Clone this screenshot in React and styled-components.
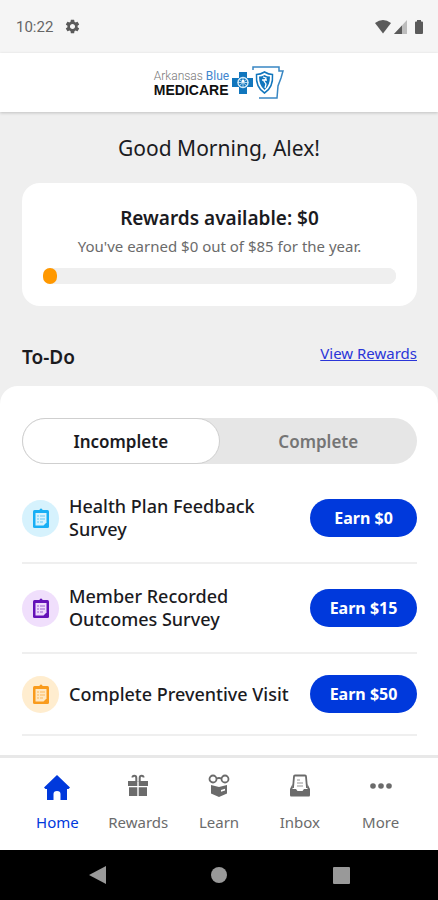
import React, { useState } from 'react';
import styled, { createGlobalStyle } from 'styled-components';
import { MdSettings } from 'react-icons/md';

const blue = '#0039dc';
const ink = '#1b1b1f';
const grey = '#6b6b6b';
const line = '#efefef';

const GlobalStyle = createGlobalStyle`
    * {
        box-sizing: border-box;
    }

    body {
        margin: 0;
        background-color: #efefef;
        color: ${ink};
        font-family: "Noto Sans", "Open Sans", sans-serif;
    }

    h1, h2, p, ul {
        margin: 0;
        padding: 0;
    }

    button {
        border: 0;
        font-family: inherit;
        cursor: pointer;
    }
`;

const Screen = styled.div`
    display: flex;
    flex-direction: column;
    min-height: 100vh;
`;

const StatusBar = styled.div`
    display: flex;
    align-items: center;
    justify-content: space-between;
    height: 53px;
    padding: 0 15px 0 16px;
    background-color: #f5f5f5;
    color: #5a5a5a;
`;

const StatusGroup = styled.div`
    display: flex;
    align-items: center;
    gap: ${props => props.$gap}px;
`;

const Time = styled.span`
    font: 400 15px/20px Roboto, sans-serif;
    color: #666;
`;

const Header = styled.header`
    display: flex;
    align-items: center;
    justify-content: center;
    gap: 3px;
    height: 59px;
    background-color: #fff;
    box-shadow: 0 1px 3px rgba(0, 0, 0, 0.2);
`;

const Wordmark = styled.div`
    display: flex;
    flex-direction: column;
    line-height: 14px;
`;

const WordmarkTop = styled.span`
    font-family: Roboto, sans-serif;
    font-size: 12px;
    font-weight: 300;
    color: #777;

    em {
        font-style: normal;
        font-weight: 400;
        color: #3f86cf;
    }
`;

const WordmarkBottom = styled.span`
    font-family: "Liberation Sans", sans-serif;
    font-size: 14px;
    font-weight: bold;
    color: #111;
`;

const Main = styled.main`
    display: flex;
    flex: 1;
    flex-direction: column;
`;

const Greeting = styled.h1`
    padding: 22px 22px 21px;
    font-size: 21px;
    font-weight: 400;
    line-height: 28px;
    text-align: center;
`;

const RewardsCard = styled.section`
    display: flex;
    flex-direction: column;
    margin: 0 21px 0 22px;
    padding: 21px 21px 22px;
    border-radius: 18px;
    background-color: #fff;
    text-align: center;
`;

const RewardsTitle = styled.h2`
    font-size: 19px;
    font-weight: 600;
    line-height: 28px;
`;

const RewardsText = styled.p`
    font-size: 15px;
    line-height: 28px;
    color: ${grey};
`;

const Progress = styled.progress`
    appearance: none;
    display: block;
    width: 100%;
    height: 16px;
    margin-top: 8px;
    border: 0;
    border-radius: 8px;
    background-color: #efefef;

    &::-webkit-progress-bar {
        border-radius: 8px;
        background-color: #efefef;
    }

    &::-webkit-progress-value {
        min-width: 14px;
        border-radius: 8px;
        background-color: #ff9800;
    }
`;

const TodoHeader = styled.div`
    display: flex;
    align-items: center;
    justify-content: space-between;
    height: 80px;
    padding: 22px 21px 0 22px;
`;

const TodoTitle = styled.h2`
    font-size: 19px;
    font-weight: 600;
    line-height: 24px;
`;

const RewardsLink = styled.a`
    padding-bottom: 8px;
    font-size: 15px;
    line-height: 20px;
    color: #2a35d8;
`;

const Sheet = styled.section`
    flex: 1;
    padding: 32px 21px 18px 22px;
    border-radius: 18px 18px 0 0;
    background-color: #fff;
`;

const Toggle = styled.div`
    display: flex;
    height: 46px;
    margin-bottom: 10px;
    border-radius: 23px;
    background-color: #e6e6e6;
`;

const ToggleButton = styled.button`
    flex: 1;
    border: 1px solid ${props => (props.$active ? '#cfcfcf' : 'transparent')};
    border-radius: 23px;
    background-color: ${props => (props.$active ? '#fff' : 'transparent')};
    color: ${props => (props.$active ? ink : '#757575')};
    font-size: 17px;
    font-weight: 600;
`;

const TaskList = styled.ul`
    list-style: none;
`;

const Task = styled.li`
    display: flex;
    align-items: center;
    padding: 21px 0;
    border-bottom: 2px solid ${line};
`;

const TaskIcon = styled.span`
    display: flex;
    flex-shrink: 0;
    align-items: center;
    justify-content: center;
    width: 37px;
    height: 37px;
    border-radius: 50%;
    background-color: ${props => props.$background};
`;

const TaskTitle = styled.span`
    flex: 1;
    padding: 0 12px 0 10px;
    font-size: 18px;
    font-weight: 500;
    line-height: 23px;
`;

const EarnButton = styled.button`
    flex-shrink: 0;
    width: 107px;
    height: 38px;
    border-radius: 19px;
    background-color: ${blue};
    color: #fff;
    font-size: 16px;
    font-weight: 700;
`;

const TabBar = styled.nav`
    display: flex;
    height: 95px;
    padding: 0 17px;
    border-top: 3px solid #e8e8e8;
    background-color: #fff;
`;

const Tab = styled.a`
    display: flex;
    flex: 1;
    flex-direction: column;
    align-items: center;
    gap: 9px;
    padding-top: 15px;
    color: ${props => (props.$active ? blue : grey)};
    font-size: 15px;
    line-height: 20px;
    text-decoration: none;
`;

const TabIcon = styled.svg`
    width: 30px;
    height: 30px;
`;

const SystemBar = styled.div`
    display: flex;
    height: 50px;
    padding: 0 36px;
    background-color: #000;
`;

const SystemButton = styled.button`
    display: flex;
    flex: 1;
    align-items: center;
    justify-content: center;
    padding: 0;
    background: none;
    color: #999;
`;

const LogoMarks = () => (
    <svg width="52" height="36" viewBox="0 0 52 36" fill="none" aria-hidden="true">
        <path d="M7 7h8v6h6v9h-6v7H7v-7H0v-9h7z" fill="#1176bd" />
        <circle cx="11" cy="17.5" r="5" stroke="#d5ebf8" strokeWidth="1.4" />
        <path d="M11 12v11M5.500 17.500h11M7 14l8 7M15 14l-8 7" stroke="#d5ebf8" strokeWidth="0.8" />
        <circle cx="11" cy="16" r="1.300" fill="#fff" />
        <path d="M21 5V2h26v4h4l-2 7-3 8-1 12H27" stroke="#3987c3" strokeWidth="1.500" />
        <path d="M24.500 9.500q4 0 8-2.500 4 2.500 8 2.500 1 13-8 18.500-9-5.500-8-18.500z" fill="#fff" stroke="#1176bd" strokeWidth="1.500" />
        <path d="M27 11.500q3 0 5.500-1.500 2.500 1.500 5.500 1.500 0 9-5.500 13.500-5.500-4.500-5.500-13.500z" fill="#1176bd" />
        <path d="M31 12l3 1-2 3 2 3-1 4M30 15h5" stroke="#fff" strokeWidth="1.300" />
    </svg>
);

const WifiIcon = () => (
    <svg width="16" height="14" viewBox="0 0 16 14" aria-hidden="true">
        <path d="M0 3q8-6 16 0L8 13.500z" fill="currentColor" />
    </svg>
);

const SignalIcon = () => (
    <svg width="13" height="14" viewBox="0 0 13 14" aria-hidden="true">
        <path d="M13 0v14H0z" fill="#bdbdbd" />
        <path d="M8 5.400V14H0z" fill="currentColor" />
    </svg>
);

const BatteryIcon = () => (
    <svg width="8" height="14" viewBox="0 0 8 14" aria-hidden="true">
        <path d="M2 0h4v1.500h1q1 0 1 1V13q0 1-1 1H1q-1 0-1-1V2.500q0-1 1-1h1z" fill="currentColor" />
    </svg>
);

const ClipboardIcon = ({ color, paper }) => (
    <svg width="18" height="20" viewBox="0 0 18 20" aria-hidden="true">
        <rect x="1" y="2" width="16" height="18" rx="1.500" fill={color} />
        <path d="M6 2h1.500a1.500 1.500 0 0 1 3 0H12v2H6z" fill={color} />
        <path d="M3.500 5h11v9.500l-3 3h-8z" fill={paper} />
        <path d="M5 8h2m1 0h5M5 11h2m1 0h5M5 14h2m1 0h3" stroke={color} strokeWidth="1" opacity="0.6" />
    </svg>
);

const tabIcons = {
    Home: <path d="M15 2l13 12.500-1.500 1.500H25v11h-6.500v-6q0-3-3.500-3t-3.500 3v6H5V16H3.500L2 14.500z" fill="currentColor" />,
    Rewards: (
        <>
            <path d="M5 8h9.300v5H5zM15.700 8H25v5h-9.300zM6 14.300h8.300V23H6zM15.700 14.300H24V23h-8.300z" fill="currentColor" />
            <path d="M13.300 9V5q0-2.200-2-2.200T9.500 4.500M16.700 9V5q0-2.200 2-2.200t1.800 1.700" fill="none" stroke="currentColor" strokeWidth="2" />
        </>
    ),
    Learn: (
        <>
            <circle cx="9" cy="6" r="3.500" fill="none" stroke="currentColor" strokeWidth="1.800" />
            <circle cx="21" cy="6" r="3.500" fill="none" stroke="currentColor" strokeWidth="1.800" />
            <path d="M12.500 5.500q2.500-1 5 0" fill="none" stroke="currentColor" strokeWidth="1.800" />
            <path d="M7 12l8 2 8-2v8.500l-8 3.500-8-3.500z" fill="currentColor" />
            <path d="M17 17l4-1.300v1.800l-4 1.300z" fill="#fff" />
        </>
    ),
    Inbox: (
        <>
            <path d="M8 15L9 3.500Q9 2.500 10 2.500h10q1 0 1 1L22 15" fill="none" stroke="currentColor" strokeWidth="1.800" />
            <path d="M7.500 11L5 16v6q0 1.500 1 1.500h18q1 0 1-1.500v-6l-2.500-5v5H19l-1.500 2h-5L11 16H7.500z" fill="currentColor" />
            <path d="M12 7h3M12 10h6M12 13h6" stroke="currentColor" strokeWidth="1.200" opacity="0.7" />
        </>
    ),
    More: (
        <g fill="currentColor">
            <circle cx="7" cy="13" r="2.800" />
            <circle cx="15" cy="13" r="2.800" />
            <circle cx="23" cy="13" r="2.800" />
        </g>
    ),
};

const tasks = [
    { title: 'Health Plan Feedback Survey', amount: 0, color: '#18aff5', paper: '#d8f2fd', background: '#d6f2fd' },
    { title: 'Member Recorded Outcomes Survey', amount: 15, color: '#6412b8', paper: '#eedcfb', background: '#f0dffc' },
    { title: 'Complete Preventive Visit', amount: 50, color: '#f99b1c', paper: '#ffe8c2', background: '#ffedcf' },
];

const filters = ['Incomplete', 'Complete'];

const App = () => {
    const [filter, setFilter] = useState('Incomplete');

    return (
        <Screen>
            <GlobalStyle />
            <StatusBar>
                <StatusGroup $gap={11}>
                    <Time>10:22</Time>
                    <MdSettings size={17} />
                </StatusGroup>
                <StatusGroup $gap={8}>
                    <StatusGroup $gap={3}>
                        <WifiIcon />
                        <SignalIcon />
                    </StatusGroup>
                    <BatteryIcon />
                </StatusGroup>
            </StatusBar>
            <Header>
                <Wordmark>
                    <WordmarkTop>Arkansas <em>Blue</em></WordmarkTop>
                    <WordmarkBottom>MEDICARE</WordmarkBottom>
                </Wordmark>
                <LogoMarks />
            </Header>
            <Main>
                <Greeting>Good Morning, Alex!</Greeting>
                <RewardsCard>
                    <RewardsTitle>Rewards available: $0</RewardsTitle>
                    <RewardsText>You've earned $0 out of $85 for the year.</RewardsText>
                    <Progress value={0} max={85} aria-label="Rewards earned" />
                </RewardsCard>
                <TodoHeader>
                    <TodoTitle>To-Do</TodoTitle>
                    <RewardsLink href="#rewards">View Rewards</RewardsLink>
                </TodoHeader>
                <Sheet>
                    <Toggle>
                        {filters.map(name => (
                            <ToggleButton
                                key={name}
                                type="button"
                                $active={filter === name}
                                aria-pressed={filter === name}
                                onClick={() => setFilter(name)}
                            >
                                {name}
                            </ToggleButton>
                        ))}
                    </Toggle>
                    <TaskList>
                        {tasks.map(task => (
                            <Task key={task.title}>
                                <TaskIcon $background={task.background}>
                                    <ClipboardIcon color={task.color} paper={task.paper} />
                                </TaskIcon>
                                <TaskTitle>{task.title}</TaskTitle>
                                <EarnButton type="button">Earn ${task.amount}</EarnButton>
                            </Task>
                        ))}
                    </TaskList>
                </Sheet>
            </Main>
            <TabBar>
                {Object.keys(tabIcons).map(name => (
                    <Tab key={name} href={`#${name.toLowerCase()}`} $active={name === 'Home'}>
                        <TabIcon viewBox="0 0 30 30" aria-hidden="true">{tabIcons[name]}</TabIcon>
                        {name}
                    </Tab>
                ))}
            </TabBar>
            <SystemBar>
                <SystemButton type="button" aria-label="Back">
                    <svg width="17" height="18" viewBox="0 0 17 18"><path d="M17 0v18L0 9z" fill="currentColor" /></svg>
                </SystemButton>
                <SystemButton type="button" aria-label="Home screen">
                    <svg width="16" height="16" viewBox="0 0 16 16"><circle cx="8" cy="8" r="8" fill="currentColor" /></svg>
                </SystemButton>
                <SystemButton type="button" aria-label="Overview">
                    <svg width="17" height="17" viewBox="0 0 17 17"><rect width="17" height="17" rx="1" fill="currentColor" /></svg>
                </SystemButton>
            </SystemBar>
        </Screen>
    );
};

export default App;
